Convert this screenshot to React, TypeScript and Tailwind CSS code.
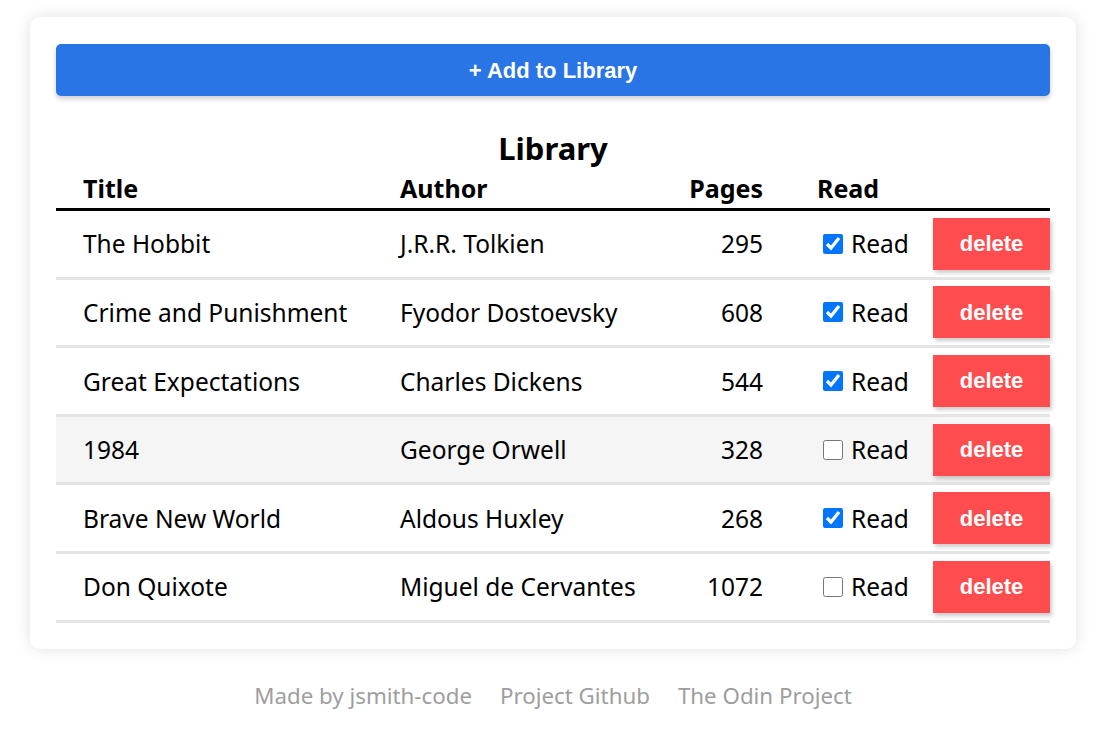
import React from "react";

const books = [
  { title: "The Hobbit", author: "J.R.R. Tolkien", pages: 295, read: true },
  { title: "Crime and Punishment", author: "Fyodor Dostoevsky", pages: 608, read: true },
  { title: "Great Expectations", author: "Charles Dickens", pages: 544, read: true },
  { title: "1984", author: "George Orwell", pages: 328, read: false, hover: true },
  { title: "Brave New World", author: "Aldous Huxley", pages: 268, read: true },
  { title: "Don Quixote", author: "Miguel de Cervantes", pages: 1072, read: false },
];

const cols = "grid grid-cols-[344px_270px_93px_54px_116px_117px]";

export default function App() {
  return (
    <div className="min-h-[751px] bg-white pt-[17px] font-['Noto_Sans','Liberation_Sans',sans-serif] text-black">
      <div className="ml-[30px] w-[1046px]">
        <div className="rounded-[10px] bg-white px-[26px] pt-[27px] pb-[26px] shadow-[0_0_16px_rgba(0,0,0,0.12)]">
          <button className="flex h-[52px] w-full items-center justify-center rounded-[5px] bg-[#2a75e5] font-['Liberation_Sans',Arial,sans-serif] text-[22px] font-bold text-white shadow-[0_3px_5px_rgba(0,0,0,0.2)]">
            + Add to Library
          </button>
          <div className="mt-[32px] flex h-[40px] items-center justify-center text-[31px] font-bold">
            Library
          </div>
          <div className={`${cols} h-[43px] items-center border-b-[3px] border-black pt-[2px] text-[25px] font-bold`}>
            <div className="pl-[27px]">Title</div>
            <div>Author</div>
            <div className="text-right">Pages</div>
            <div />
            <div>Read</div>
            <div />
          </div>
          {books.map((b) => (
            <div
              key={b.title}
              className={`${cols} h-[68.6px] items-center border-b-[3px] border-[#e4e4e4] text-[24.5px] ${b.hover ? "bg-[#f5f5f5]" : ""}`}
            >
              <div className="pl-[27px] pt-[2px]">{b.title}</div>
              <div className="pt-[2px]">{b.author}</div>
              <div className="pt-[2px] text-right">{b.pages}</div>
              <div />
              <label className="flex items-center pl-[6px]">
                <input type="checkbox" defaultChecked={b.read} className="m-0 mr-[8px] h-5 w-5" />
                <span className="pt-[2px]">Read</span>
              </label>
              <button className="flex h-[52px] w-[117px] items-center justify-center bg-[#ff4d4f] font-['Liberation_Sans',Arial,sans-serif] text-[22px] font-bold text-white shadow-[2px_3px_4px_rgba(0,0,0,0.2)]">
                delete
              </button>
            </div>
          ))}
        </div>
        <div className="mt-[30px] flex justify-center gap-[28px] text-[22.3px] text-[#9e9e9e]">
          <span>Made by jsmith-code</span>
          <span>Project Github</span>
          <span>The Odin Project</span>
        </div>
      </div>
    </div>
  );
}
